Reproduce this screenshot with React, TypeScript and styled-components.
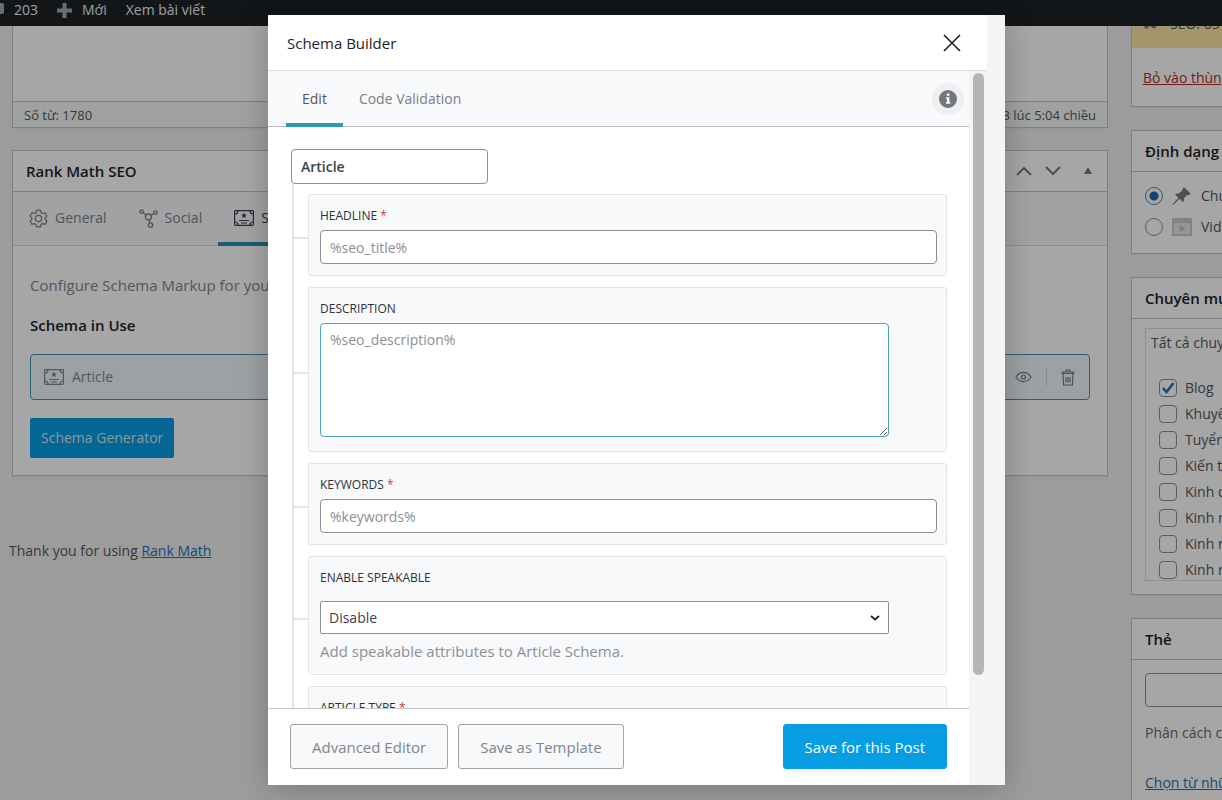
import React from "react";
import styled, { createGlobalStyle, css } from "styled-components";

const font = `"Open Sans", "Noto Sans", "Liberation Sans", sans-serif`;

const Global = createGlobalStyle`
  *, *::before, *::after { box-sizing: border-box; }
  html, body { margin: 0; height: 100%; overflow: hidden; }
  body { background: #f0f0f1; color: #50575e; font: 14px/20px ${font}; }
  button, input, select, textarea { font: inherit; color: inherit; }
  h1, h2, h3, p, ul { margin: 0; padding: 0; font-weight: 400; }
`;

/* ---------- admin page ---------- */

const AdminBar = styled.header`
  position: fixed;
  inset: 0 0 auto 0;
  z-index: 1;
  display: flex;
  height: 26px;
  background: #1d2327;
  color: #f0f0f1;
`;

const BarLink = styled.a`
  display: flex;
  align-items: center;
  gap: 10px;
  height: 20px;
  color: inherit;
  text-decoration: none;
  white-space: nowrap;
  margin-right: 19px;
`;

const Page = styled.div`
  display: flex;
  gap: 23px;
  height: 100vh;
  overflow: hidden;
`;

const Main = styled.main`
  flex: 1;
  min-width: 0;
`;

const Boxes = styled.div`
  display: flex;
  flex-direction: column;
  gap: 22px;
  padding-left: 12px;
`;

const Side = styled.aside`
  flex: 0 0 91px;
  overflow: hidden;
  white-space: nowrap;
`;

const SideList = styled.div`
  display: flex;
  flex-direction: column;
  gap: 23px;
  width: 308px;
`;

const Box = styled.section`
  background: #fff;
  border: 1px solid #c3c4c7;
  box-shadow: 0 1px 1px rgba(0, 0, 0, 0.04);
`;

const BoxHeader = styled.div`
  display: flex;
  align-items: center;
  height: 41px;
  padding: 0 15px 0 13px;
  border-bottom: 1px solid #c3c4c7;
`;

const BoxTitle = styled.h2`
  flex: 1;
  font-size: 15px;
  font-weight: 600;
  color: #1d2327;
`;

const EditorBody = styled.div`
  height: 100px;
`;

const StatusBar = styled.div`
  display: flex;
  justify-content: space-between;
  align-items: center;
  height: 26px;
  padding: 0 11px;
  background: #f6f7f7;
  border-top: 1px solid #c3c4c7;
  font-size: 13px;
`;

const HeaderTools = styled.div`
  display: flex;
  align-items: center;
  gap: 10px;
`;

const IconButton = styled.button`
  display: grid;
  place-items: center;
  padding: 0;
  border: 0;
  background: none;
  color: #787c82;
`;

const ToggleButton = styled(IconButton)`
  margin-left: 12px;
`;

const SeoTabs = styled.nav`
  display: flex;
  height: 54px;
  background: #f8f9fa;
  border-bottom: 1px solid #d5d7da;
`;

const SeoTab = styled.button<{ $active?: boolean }>`
  display: flex;
  align-items: center;
  gap: 7px;
  height: 54px;
  padding: 2px 16px 0;
  border: 0;
  border-bottom: 4px solid ${(p) => (p.$active ? "#2491ae" : "transparent")};
  background: none;
  color: ${(p) => (p.$active ? "#3c434a" : "#7c8086")};
`;

const SeoBody = styled.div`
  padding: 29px 17px 17px;
`;

const Lead = styled.p`
  font-size: 15px;
  color: #7f868d;
`;

const SubHeading = styled.h3`
  margin: 20px 0 19px;
  font-size: 15px;
  font-weight: 600;
  color: #1d2327;
`;

const SchemaRow = styled.div`
  display: flex;
  align-items: center;
  height: 46px;
  padding: 0 14px 0 13px;
  border: 1px solid #3a96b3;
  border-radius: 4px;
  background: #f0f7fa;
  color: #7f868d;
`;

const SchemaName = styled.span`
  flex: 1;
  margin-left: 8px;
`;

const RowActions = styled.div`
  display: flex;
  align-items: center;
`;

const Divider = styled.span`
  width: 1px;
  height: 18px;
  margin: 0 14px;
  background: #cfdbe1;
`;

const Generator = styled.button`
  height: 40px;
  margin-top: 18px;
  padding: 0 11px;
  border: 0;
  border-radius: 2px;
  background: #069de3;
  color: #d8e9f2;
`;

const Thanks = styled.footer`
  margin-top: 65px;
  padding-left: 9px;
`;

const TextLink = styled.a<{ $danger?: boolean }>`
  color: ${(p) => (p.$danger ? "#b32d2e" : "#2271b1")};
`;

const PublishBox = styled(Box)`
  height: 107px;
  border-top: 0;
`;

const SeoScore = styled.div`
  display: flex;
  align-items: center;
  gap: 8px;
  height: 48px;
  padding-left: 12px;
  background: #fbe7a5;
`;

const Trash = styled.div`
  padding: 20px 11px;
`;

const FormatList = styled.div`
  display: flex;
  flex-direction: column;
  gap: 11px;
  height: 81px;
  padding: 14px 13px;
`;

const Choice = styled.label<{ $wide?: boolean }>`
  display: flex;
  align-items: center;
  gap: ${(p) => (p.$wide ? 9 : 8)}px;
`;

const Radio = styled.input`
  appearance: none;
  width: 18px;
  height: 18px;
  margin: 0;
  border: 1px solid #8c8f94;
  border-radius: 50%;
  background: #fff;
  &:checked {
    border-color: #5f7f9c;
    background: radial-gradient(circle, #1f66ad 4px, #fff 5px);
  }
`;

const CategoryBody = styled.div`
  padding: 9px 13px 13px;
`;

const CategoryPanel = styled.div`
  height: 253px;
  overflow: hidden;
  padding: 4px 5px 0;
  border: 1px solid #dcdcde;
`;

const CategoryList = styled.ul`
  margin-top: 25px;
  padding-left: 8px;
  list-style: none;
`;

const CategoryItem = styled.li`
  height: 26px;
`;

const Tick = styled.span`
  display: grid;
  > * {
    grid-area: 1 / 1;
  }
`;

const TickBox = styled.input`
  appearance: none;
  width: 18px;
  height: 18px;
  margin: 0;
  border: 1px solid #8c8f94;
  border-radius: 4px;
  background: #fff;
`;

const TagBody = styled.div`
  display: flex;
  flex-direction: column;
  align-items: flex-start;
  padding: 13px 13px 40px;
`;

const TagInput = styled.input`
  width: 220px;
  height: 34px;
  margin-bottom: 16px;
  border: 1px solid #8c8f94;
  border-radius: 4px;
  background: #fff;
`;

const TagHint = styled.p`
  margin-bottom: 30px;
  color: #646970;
`;

/* ---------- modal ---------- */

const Overlay = styled.div`
  position: fixed;
  inset: 0;
  z-index: 2;
  display: flex;
  padding: 15px 217px 15px 268px;
  background: rgba(0, 0, 0, 0.35);
`;

const Modal = styled.div`
  flex: 1;
  min-width: 0;
  display: flex;
  flex-direction: column;
  background: #f4f4f5;
  box-shadow: 0 3px 30px rgba(0, 0, 0, 0.25);
`;

const ModalHeader = styled.div`
  display: flex;
  align-items: center;
  justify-content: space-between;
  height: 56px;
  margin-right: 18px;
  padding: 0 26px 0 19px;
  border-bottom: 1px solid #dcdee1;
  background: #fff;
`;

const ModalTitle = styled.h1`
  font-size: 15px;
  font-weight: 500;
  color: #1d2327;
`;

const ModalBody = styled.div`
  flex: 1;
  min-height: 0;
  display: flex;
`;

const Content = styled.div`
  flex: 1;
  min-width: 0;
  display: flex;
  flex-direction: column;
  background: #fff;
`;

const ScrollTrack = styled.div`
  width: 36px;
  padding: 2px 21px 0 4px;
`;

const ScrollThumb = styled.div`
  height: 602px;
  max-height: 100%;
  border-radius: 6px;
  background: #b5b5b5;
`;

const ModalTabs = styled.div`
  display: flex;
  align-items: center;
  height: 56px;
  padding: 0 5px 0 18px;
  border-bottom: 1px solid #b9bdc3;
  background: #f8f9fb;
`;

const ModalTab = styled.button<{ $active?: boolean }>`
  height: 56px;
  padding: 4px 16px 0;
  border: 0;
  border-bottom: 4px solid ${(p) => (p.$active ? "#2c9ab7" : "transparent")};
  background: none;
  color: ${(p) => (p.$active ? "#50575e" : "#7c8086")};
`;

const InfoButton = styled(IconButton)`
  width: 32px;
  height: 32px;
  margin-left: auto;
  border-radius: 50%;
  background: #eeeff0;
`;

const Form = styled.form`
  flex: 1;
  min-height: 0;
  overflow: hidden;
  padding: 22px 22px 0 23px;
`;

const control = css`
  display: block;
  border: 1px solid #8c8f94;
  border-radius: 4px;
  background: #fff;
`;

const NameInput = styled.input`
  ${control}
  width: 197px;
  height: 35px;
  padding: 0 9px;
  font-weight: 600;
  color: #3c434a;
`;

const Tree = styled.div`
  display: flex;
  flex-direction: column;
  gap: 11px;
  margin-left: 1px;
  padding-top: 10px;
  border-left: 2px solid #e3e4e7;
`;

const Branch = styled.div`
  display: flex;
  align-items: center;
  &::before {
    content: "";
    width: 14px;
    height: 2px;
    margin-top: 6px;
    background: #e3e4e7;
  }
`;

const Card = styled.div`
  flex: 1;
  padding: 11px 9px 11px 11px;
  border: 1px solid #e2e4e8;
  border-radius: 3px;
  background: #f8f9fb;
`;

const Label = styled.label`
  display: block;
  margin-bottom: 4px;
  font-size: 12px;
  font-weight: 500;
  color: #2c3338;
  text-transform: uppercase;
`;

const Required = styled.span`
  color: #d63638;
`;

const TextInput = styled.input`
  ${control}
  width: 100%;
  height: 34px;
  padding: 0 9px;
  &::placeholder { color: #8c8f94; }
`;

const TextArea = styled.textarea`
  ${control}
  width: calc(100% - 48px);
  height: 114px;
  margin-bottom: 3px;
  padding: 6px 9px;
  border-color: #4ba5bc;
  &::placeholder { color: #8c8f94; }
`;

const SelectWrap = styled.div`
  display: grid;
  align-items: center;
  width: calc(100% - 48px);
  margin-top: 13px;
  > * { grid-area: 1 / 1; }
  > svg { justify-self: end; margin-right: 9px; pointer-events: none; }
`;

const Select = styled.select`
  ${control}
  appearance: none;
  width: 100%;
  height: 33px;
  padding: 0 8px;
  border-radius: 2px;
  color: #3c434a;
`;

const Help = styled.p`
  margin: 6px 0 1px;
  font-size: 15px;
  line-height: 22px;
  color: #8c9197;
`;

const ModalFooter = styled.div`
  display: flex;
  gap: 10px;
  height: 77px;
  padding: 15px 22px 16px;
  border-top: 1px solid #c6c8cb;
  background: #fff;
`;

const Button = styled.button<{ $primary?: boolean }>`
  height: 45px;
  padding: 0 21px;
  border: 1px solid ${(p) => (p.$primary ? "#069de3" : "#a0a3a7")};
  border-radius: 3px;
  background: ${(p) => (p.$primary ? "#069de3" : "#f8f9fb")};
  color: ${(p) => (p.$primary ? "#fff" : "#7f868d")};
  font-size: 15px;
  margin-left: ${(p) => (p.$primary ? "auto" : "0")};
`;

/* ---------- icons ---------- */

const line = { fill: "none", stroke: "currentColor" } as const;

const PlusIcon = () => (
  <svg width="15" height="15" viewBox="0 0 15 15" fill="#a7aaad">
    <path d="M5.500 0h4v5.500h5.500v4h-5.500V15h-4V9.500H0v-4h5.500z" />
  </svg>
);

const CommentIcon = () => (
  <svg width="4" height="16" viewBox="0 0 4 16" fill="#a7aaad">
    <path d="M0 1h2a2 2 0 0 1 2 2v7a2 2 0 0 1-2 2H0z" />
  </svg>
);

const Chevron = ({ down }: { down?: boolean }) => (
  <svg width="19" height="12" viewBox="0 0 19 12" {...line} strokeWidth="2">
    <path d={down ? "M3 2l7 7 7-7" : "M3 10l7-7 7 7"} />
  </svg>
);

const TriangleIcon = () => (
  <svg width="8" height="8" viewBox="0 0 8 8" fill="currentColor">
    <path d="M4 0l4 7H0z" />
  </svg>
);

const GearIcon = () => (
  <svg width="19" height="19" viewBox="0 0 24 24" {...line} strokeWidth="1.600" strokeLinejoin="round">
    <path d="M9.500 1.500h5l.7 3.100 2 1.100 3-1 2.500 4.300-2.300 2.100v2l2.300 2.100-2.500 4.300-3-1-2 1.100-.7 3.100h-5l-.7-3.100-2-1.100-3 1-2.500-4.300 2.300-2.100v-2l-2.300-2.100 2.500-4.300 3 1 2-1.100z" />
    <circle cx="12" cy="12" r="4" />
  </svg>
);

const SocialIcon = () => (
  <svg width="19" height="19" viewBox="0 0 19 19" {...line} strokeWidth="1.300">
    <circle cx="2.500" cy="2.500" r="1.700" />
    <circle cx="16.500" cy="3.500" r="1.700" />
    <circle cx="9.500" cy="8" r="3" />
    <circle cx="11.500" cy="16" r="2.200" />
    <path d="M4 3.500l3 2.500M15 4.500l-3 2M10.200 11l.7 2.800" />
  </svg>
);

const SchemaIcon = () => (
  <svg width="20" height="16" viewBox="0 0 20 16" {...line} strokeWidth="1.200">
    <rect x=".6" y=".6" width="18.800" height="14.800" rx=".8" />
    <path d="M1 4c2 0 3-1 3-3M19 4c-2 0-3-1-3-3M1 12c2 0 3 1 3 3M19 12c-2 0-3 1-3 3M5 10.500h10M7 13h6" />
    <path d="M10 2.800l.9 1.700 1.900.3-1.400 1.300.4 1.900-1.800-.9-1.800.9.400-1.900-1.400-1.300 1.900-.3z" fill="currentColor" stroke="none" />
  </svg>
);

const EyeIcon = () => (
  <svg width="17" height="12" viewBox="0 0 17 12" {...line} strokeWidth="1.200">
    <path d="M1 6c2-3 4.500-4.600 7.500-4.600S14 3 16 6c-2 3-4.500 4.600-7.500 4.600S3 9 1 6z" />
    <circle cx="8.500" cy="6" r="2" />
  </svg>
);

const TrashIcon = () => (
  <svg width="14" height="17" viewBox="0 0 14 17" {...line} strokeWidth="1.200">
    <path d="M.5 4.500h13M1.500 4.500V3h11v1.500M5 3V1h4v2M2 5l.6 11h8.800L12 5M5 8v5.500M7 8v5.500M9 8v5.500" />
  </svg>
);

const CloseIcon = () => (
  <svg width="18" height="18" viewBox="0 0 18 18" fill="none" stroke="#1d2327" strokeWidth="1.600">
    <path d="M1 1l16 16M17 1L1 17" />
  </svg>
);

const InfoIcon = () => (
  <svg width="18" height="18" viewBox="0 0 18 18">
    <circle cx="9" cy="9" r="9" fill="#73777b" />
    <path d="M7.800 3.500h2.600v2.300H7.800zM7 7.300h3.400v5h.9v1.500H7v-1.500h.9V8.800H7z" fill="#fff" />
  </svg>
);

const PinIcon = () => (
  <svg width="20" height="20" viewBox="0 0 20 20" fill="#787c82">
    <path d="M10.400 3l1.800-1.700 6.300 6.300-1.800 1.700-1.600-.2-3.200 3.200c.4 1.400.1 2.900-.9 3.900L7.400 12.700 1.600 18.400.6 19l.6-1.400 5.200-5.900L3 8.500c1-1 2.500-1.300 3.900-.9l3.300-3.100z" />
  </svg>
);

const VideoIcon = () => (
  <svg width="20" height="20" viewBox="0 0 20 20">
    <path d="M0 1h20v18H0z" fill="#c6c8cb" />
    <path d="M2 6h16v11H2z" fill="#e6e6e8" />
    <path d="M7.500 8l6 3.500-6 3.500z" fill="#bfc1c4" />
  </svg>
);

const CheckIcon = () => (
  <svg width="18" height="18" viewBox="0 0 18 18" fill="none" stroke="#2271b1" strokeWidth="2.600" pointerEvents="none">
    <path d="M4 9l3.500 4 7-9" />
  </svg>
);

const ScoreIcon = () => (
  <svg width="18" height="14" viewBox="0 0 18 14" fill="none" stroke="#787c82" strokeWidth="3">
    <path d="M1 11l5-4 4 3 6-6" />
  </svg>
);

const SelectArrow = () => (
  <svg width="10" height="6" viewBox="0 0 10 6" fill="none" stroke="#1d2327" strokeWidth="1.800">
    <path d="M1 1l4 3.500L9 1" />
  </svg>
);

/* ---------- data ---------- */

const categories = ["Blog", "Khuyến mãi", "Tuyển dụng", "Kiến thức", "Kinh doanh", "Kinh nghiệm", "Kinh nghiệm", "Kinh nghiệm"];

const Field = ({ id, label, required, children }: { id: string; label: string; required?: boolean; children?: React.ReactNode }) => (
  <Branch>
    <Card>
      <Label htmlFor={id}>
        {label} {required && <Required>*</Required>}
      </Label>
      {children}
    </Card>
  </Branch>
);

export default function App() {
  return (
    <>
      <Global />
      <AdminBar>
        <BarLink href="#"><CommentIcon />203</BarLink>
        <BarLink href="#"><PlusIcon />Mới</BarLink>
        <BarLink href="#">Xem bài viết</BarLink>
      </AdminBar>

      <Page>
        <Main>
          <Boxes>
            <Box>
              <EditorBody />
              <StatusBar>
                <span>Số từ: 1780</span>
                <span>3 lúc 5:04 chiều</span>
              </StatusBar>
            </Box>
            <Box>
              <BoxHeader>
                <BoxTitle>Rank Math SEO</BoxTitle>
                <HeaderTools>
                  <IconButton aria-label="Move up"><Chevron /></IconButton>
                  <IconButton aria-label="Move down"><Chevron down /></IconButton>
                  <ToggleButton aria-label="Toggle panel"><TriangleIcon /></ToggleButton>
                </HeaderTools>
              </BoxHeader>
              <SeoTabs>
                <SeoTab><GearIcon />General</SeoTab>
                <SeoTab><SocialIcon />Social</SeoTab>
                <SeoTab $active><SchemaIcon />Schema</SeoTab>
              </SeoTabs>
              <SeoBody>
                <Lead>Configure Schema Markup for your pages.</Lead>
                <SubHeading>Schema in Use</SubHeading>
                <SchemaRow>
                  <SchemaIcon />
                  <SchemaName>Article</SchemaName>
                  <RowActions>
                    <IconButton aria-label="Preview"><EyeIcon /></IconButton>
                    <Divider />
                    <IconButton aria-label="Delete"><TrashIcon /></IconButton>
                  </RowActions>
                </SchemaRow>
                <Generator>Schema Generator</Generator>
              </SeoBody>
            </Box>
          </Boxes>
          <Thanks>
            Thank you for using <TextLink href="#">Rank Math</TextLink>
          </Thanks>
        </Main>

        <Side>
          <SideList>
            <PublishBox>
              <SeoScore><ScoreIcon />SEO: 65 / 100</SeoScore>
              <Trash><TextLink href="#" $danger>Bỏ vào thùng rác</TextLink></Trash>
            </PublishBox>
            <Box>
              <BoxHeader><BoxTitle>Định dạng</BoxTitle></BoxHeader>
              <FormatList>
                <Choice $wide><Radio type="radio" name="format" defaultChecked /><PinIcon />Chuẩn</Choice>
                <Choice $wide><Radio type="radio" name="format" /><VideoIcon />Video</Choice>
              </FormatList>
            </Box>
            <Box>
              <BoxHeader><BoxTitle>Chuyên mục</BoxTitle></BoxHeader>
              <CategoryBody>
                <CategoryPanel>
                  Tất cả chuyên mục
                  <CategoryList>
                    {categories.map((name, i) => (
                      <CategoryItem key={i}>
                        <Choice>
                          <Tick>
                            <TickBox type="checkbox" defaultChecked={i === 0} />
                            {i === 0 && <CheckIcon />}
                          </Tick>
                          {name}
                        </Choice>
                      </CategoryItem>
                    ))}
                  </CategoryList>
                </CategoryPanel>
              </CategoryBody>
            </Box>
            <Box>
              <BoxHeader><BoxTitle>Thẻ</BoxTitle></BoxHeader>
              <TagBody>
                <TagInput aria-label="Thẻ" />
                <TagHint>Phân cách các thẻ</TagHint>
                <TextLink href="#">Chọn từ những thẻ</TextLink>
              </TagBody>
            </Box>
          </SideList>
        </Side>
      </Page>

      <Overlay>
        <Modal role="dialog" aria-label="Schema Builder">
          <ModalHeader>
            <ModalTitle>Schema Builder</ModalTitle>
            <IconButton aria-label="Close"><CloseIcon /></IconButton>
          </ModalHeader>
          <ModalBody>
            <Content>
              <ModalTabs>
                <ModalTab $active>Edit</ModalTab>
                <ModalTab>Code Validation</ModalTab>
                <InfoButton aria-label="Info"><InfoIcon /></InfoButton>
              </ModalTabs>
              <Form>
                <NameInput aria-label="Schema name" defaultValue="Article" />
                <Tree>
                  <Field id="headline" label="Headline" required>
                    <TextInput id="headline" placeholder="%seo_title%" />
                  </Field>
                  <Field id="description" label="Description">
                    <TextArea id="description" placeholder="%seo_description%" />
                  </Field>
                  <Field id="keywords" label="Keywords" required>
                    <TextInput id="keywords" placeholder="%keywords%" />
                  </Field>
                  <Field id="speakable" label="Enable Speakable">
                    <SelectWrap>
                      <Select id="speakable" defaultValue="Disable">
                        <option>Disable</option>
                        <option>Enable</option>
                      </Select>
                      <SelectArrow />
                    </SelectWrap>
                    <Help>Add speakable attributes to Article Schema.</Help>
                  </Field>
                  <Field id="type" label="Article Type" required>
                    <TextInput id="type" />
                  </Field>
                </Tree>
              </Form>
              <ModalFooter>
                <Button>Advanced Editor</Button>
                <Button>Save as Template</Button>
                <Button $primary>Save for this Post</Button>
              </ModalFooter>
            </Content>
            <ScrollTrack><ScrollThumb /></ScrollTrack>
          </ModalBody>
        </Modal>
      </Overlay>
    </>
  );
}
